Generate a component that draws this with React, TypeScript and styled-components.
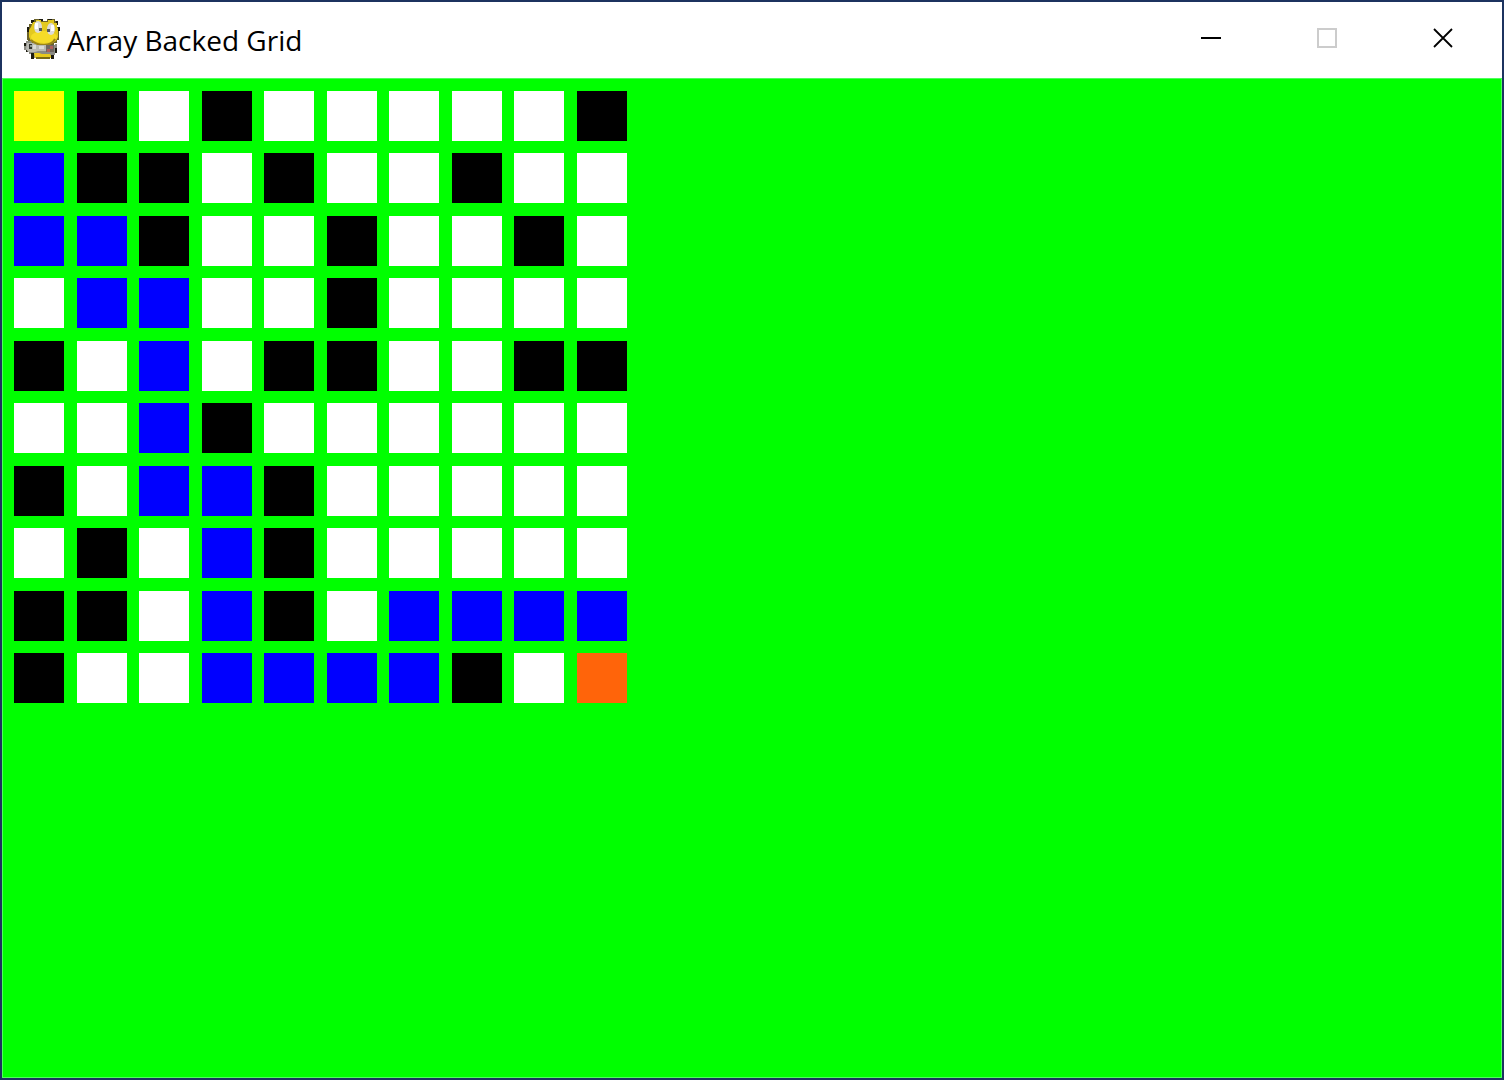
import React from "react";
import styled, { createGlobalStyle } from "styled-components";

const GlobalStyle = createGlobalStyle`
  *, *::before, *::after { box-sizing: border-box; }
  body { margin: 0; background: #1c335f; }
`;

const Window = styled.main`
  display: flex;
  flex-direction: column;
  min-height: 100vh;
  border: 2px solid #1c335f;
  background: #ffffff;
  font-family: "Open Sans", "Noto Sans", sans-serif;
`;

const TitleBar = styled.header`
  display: flex;
  align-items: stretch;
  height: 76px;
  padding: 0 1px 0 22px;
`;

const TitleGroup = styled.div`
  display: flex;
  align-items: center;
  flex: 1;
  min-width: 0;
  gap: 7px;
`;

const AppIcon = styled.svg`
  flex: none;
  width: 36px;
  height: 42px;
`;

const Title = styled.h1`
  margin: 0;
  color: #000000;
  font-size: 28px;
  line-height: 40px;
  font-weight: 400;
  white-space: nowrap;
`;

const CaptionButton = styled.button`
  display: flex;
  align-items: center;
  justify-content: center;
  width: 116px;
  padding: 0 0 4px;
  border: 0;
  background: transparent;
  color: #000000;

  &:disabled { color: #cccccc; }
`;

const Canvas = styled.section`
  flex: 1;
  border: 1px solid #4dff5c;
  background: #00ff00;
  padding: 12px 11px;
`;

const Board = styled.div`
  display: grid;
  grid-template-columns: repeat(10, 50px);
  grid-template-rows: repeat(10, 50px);
  place-content: space-between;
  width: 613px;
  height: 612px;
`;

type Kind = "start" | "goal" | "path" | "wall" | "open";

const colours: Record<Kind, string> = {
  start: "#ffff00",
  goal: "#ff640a",
  path: "#0000ff",
  wall: "#000000",
  open: "#ffffff",
};

const Cell = styled.div<{ $kind: Kind }>`
  background: ${(p) => colours[p.$kind]};
`;

const symbols: Record<string, Kind> = {
  S: "start",
  G: "goal",
  o: "path",
  "#": "wall",
  ".": "open",
};

const rows = [
  "S#.#.....#",
  "o##.#..#..",
  "oo#..#..#.",
  ".oo..#....",
  "#.o.##..##",
  "..o#......",
  "#.oo#.....",
  ".#.o#.....",
  "##.o#.oooo",
  "#..oooo#.G",
];

const SnakeIcon = () => (
  <AppIcon viewBox="0 0 36 42" aria-hidden="true">
    {/* outline */}
    <path fill="#6b6228" d="M8 2h2V0h8v2h5V0h8v2h2v6h2v13h-2v3h-3v4h-3v4H9v-4H6v-3H4v-4H3V9h2V5h3z" />
    <path fill="#8b8b84" d="M2 22h6v2h6v2h17v-1h2v8h-2v3h-3v3H9v-4H5v-2H2v-2H0v-6h2z" />
    <path fill="#1c1a10" d="M7 1h3v3H7zM15 0h4v2h-4zM24 0h4v2h-4zM32 2h2v4h-2zM3 8h2v5H3zM34 8h2v4h-2zM0 24h2v3H0zM2 31h3v2H2zM31 29h2v5h-2zM7 34h3v6H7zM27 36h3v4h-3z" />
    {/* head */}
    <path fill="#e3c91f" d="M9 3h3V1h5v2h7V1h6v3h3v5h1v9l-2 4-5 3-7 2-8-2-5-3-2-4V11l2-3z" />
    <ellipse cx="20" cy="18" rx="13" ry="6" fill="#f5dc28" />
    <path d="M7 21q5 5 13 5t11-6" fill="none" stroke="#9a8419" strokeWidth="2" />
    {/* eyes */}
    <ellipse cx="14" cy="8" rx="4" ry="6" fill="#dcdcdc" />
    <ellipse cx="27" cy="10" rx="4" ry="6" fill="#dcdcdc" />
    <path fill="#ffffff" d="M11 4h3v6h-3zM27 6h3v6h-3z" />
    <path fill="#55585c" d="M15 9h3v3h-3zM23 10h3v3h-3z" />
    {/* controller */}
    <path fill="#b9b9b2" d="M3 24h6l4 2h9v6h-8l-3 1H4l-2-3z" />
    <path fill="#dadad4" d="M9 26h3v4H9zM15 27h5v3h-5z" />
    <path fill="#33342f" d="M5 25h3v5H5z" />
    <path fill="#8f9a94" d="M6 26h2v2H6z" />
    <path fill="#6f6660" d="M22 26h8v7h-8z" />
    <path fill="#b0605a" d="M26 27h3v3h-3zM23 30h3v3h-3z" />
    {/* body */}
    <path fill="#e7c91c" d="M10 34h5l3 1h8l1 2v2H11z" />
    <path fill="#786916" d="M12 38h14v2H12z" />
  </AppIcon>
);

export default function App() {
  return (
    <>
      <GlobalStyle />
      <Window>
        <TitleBar>
          <TitleGroup>
            <SnakeIcon />
            <Title>Array Backed Grid</Title>
          </TitleGroup>
          <CaptionButton type="button" aria-label="Minimize">
            <svg width="20" height="20" viewBox="0 0 20 20" aria-hidden="true">
              <path d="M0 10h20" stroke="currentColor" strokeWidth="2" />
            </svg>
          </CaptionButton>
          <CaptionButton type="button" aria-label="Maximize" disabled>
            <svg width="20" height="20" viewBox="0 0 20 20" aria-hidden="true">
              <path d="M1 1h18v18H1z" fill="none" stroke="currentColor" strokeWidth="2" />
            </svg>
          </CaptionButton>
          <CaptionButton type="button" aria-label="Close">
            <svg width="20" height="20" viewBox="0 0 20 20" aria-hidden="true">
              <path d="M1 1l18 18M19 1L1 19" stroke="currentColor" strokeWidth="1.8" />
            </svg>
          </CaptionButton>
        </TitleBar>
        <Canvas aria-label="Grid">
          <Board>
            {rows.flatMap((row, y) =>
              [...row].map((symbol, x) => <Cell key={`${x}-${y}`} $kind={symbols[symbol]} />)
            )}
          </Board>
        </Canvas>
      </Window>
    </>
  );
}
